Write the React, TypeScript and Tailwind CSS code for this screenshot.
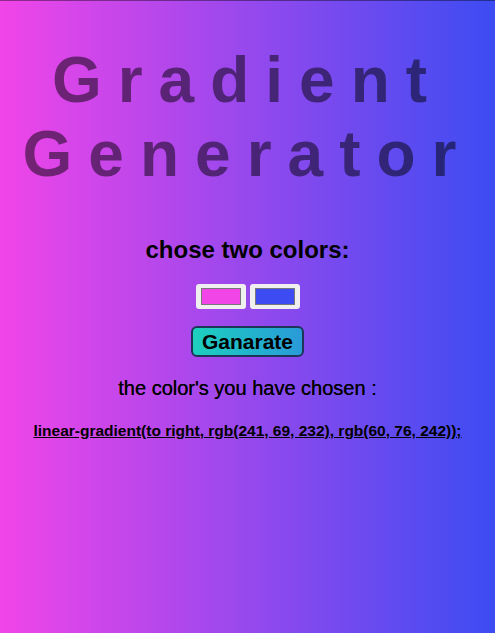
import React from 'react';

const colorA = 'rgb(241, 69, 232)';
const colorB = 'rgb(60, 76, 242)';

const Swatch: React.FC<{ color: string }> = ({ color }) => (
  <div className="w-[50px] h-[25px] bg-[#efefef] rounded-[3px] py-[4px] px-[5px] flex">
    <div className="flex-1 border border-[#777]" style={{ backgroundColor: color }} />
  </div>
);

export default function App() {
  const value = `linear-gradient(to right, ${colorA}, ${colorB});`;
  return (
    <div
      className="min-h-[633px] border-t border-black/40 flex flex-col items-center text-black"
      style={{ background: `linear-gradient(to right, ${colorA}, ${colorB})`, fontFamily: '"Liberation Sans", Arial, sans-serif' }}
    >
      <h1 className="mt-[43px] text-[64px] leading-[1.15] font-bold tracking-[16px] text-black/50 text-center">
        Gradient
        <br />
        Generator
      </h1>
      <h2 className="mt-[45px] text-[24px] leading-[1.15] font-bold">chose two colors:</h2>
      <div className="mt-[20px] flex gap-[4px]">
        <Swatch color={colorA} />
        <Swatch color={colorB} />
      </div>
      <button className="mt-[17px] h-[31px] px-[9px] rounded-[6px] border-2 border-[#1d3558] bg-gradient-to-r from-[#1ecfbd] to-[#2a9ad8] text-[21px] font-bold leading-none">
        Ganarate
      </button>
      <h3 className="mt-[20px] text-[20px] leading-[1.15] [text-shadow:0_0_0.4px_#000]">the color&apos;s you have chosen :</h3>
      <a href="#" className="mt-[22px] text-[15.5px] leading-[1.15] font-bold underline">
        {value}
      </a>
    </div>
  );
}
